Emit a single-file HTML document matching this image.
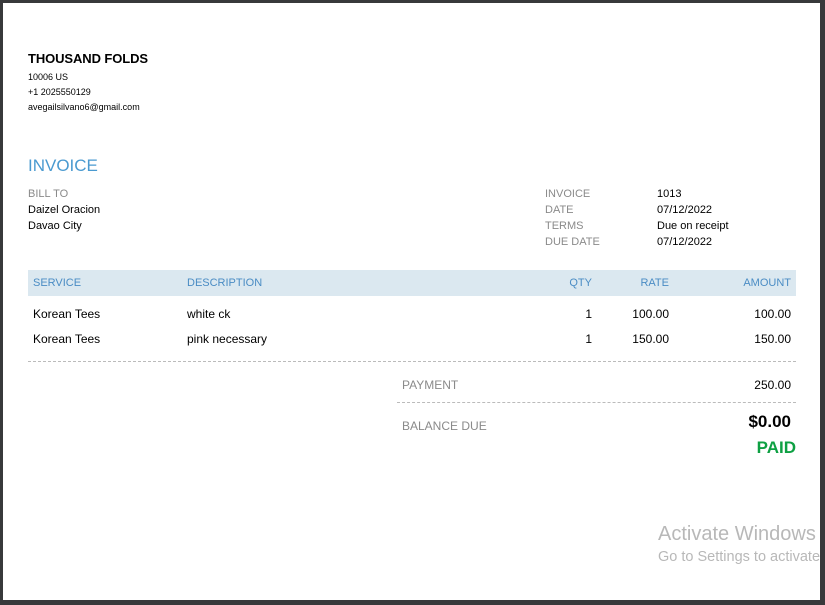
<!DOCTYPE html>
<html><head><style>
body{margin:0;width:825px;height:605px;background:#38393b;position:relative;overflow:hidden;font-family:"Liberation Sans",Arial,sans-serif;}
#p{position:absolute;left:3px;top:3px;width:817px;height:597px;background:#fff;}
.a{position:absolute;white-space:nowrap;}
.s{font-size:11px;color:#000;}
.g{font-size:11px;color:#8a8a8a;}
.h{font-size:11px;color:#4a8cc4;}
.r{text-align:right;}
</style></head><body>
<div id="p"></div>
<div class="a" style="left:28px;top:51px;font-size:13px;font-weight:bold;letter-spacing:-0.1px;">THOUSAND FOLDS</div>
<div class="a" style="left:28px;top:72px;font-size:9px;">10006 US</div>
<div class="a" style="left:28px;top:87px;font-size:9px;">+1 2025550129</div>
<div class="a" style="left:28px;top:102px;font-size:9px;">avegailsilvano6@gmail.com</div>
<div class="a" style="left:28px;top:156px;font-size:17px;color:#4a9ad0;">INVOICE</div>
<div class="a g" style="left:28px;top:188px;">BILL TO</div>
<div class="a s" style="left:28px;top:204px;">Daizel Oracion</div>
<div class="a s" style="left:28px;top:220px;">Davao City</div>
<div class="a g" style="left:545px;top:188px;">INVOICE</div>
<div class="a g" style="left:545px;top:204px;">DATE</div>
<div class="a g" style="left:545px;top:220px;">TERMS</div>
<div class="a g" style="left:545px;top:236px;">DUE DATE</div>
<div class="a s" style="left:657px;top:188px;">1013</div>
<div class="a s" style="left:657px;top:204px;">07/12/2022</div>
<div class="a s" style="left:657px;top:220px;">Due on receipt</div>
<div class="a s" style="left:657px;top:236px;">07/12/2022</div>
<div class="a" style="left:28px;top:270px;width:768px;height:26px;background:#dbe8f0;"></div>
<div class="a h" style="left:33px;top:277px;">SERVICE</div>
<div class="a h" style="left:187px;top:277px;">DESCRIPTION</div>
<div class="a h r" style="left:540px;top:277px;width:52px;">QTY</div>
<div class="a h r" style="left:610px;top:277px;width:59px;">RATE</div>
<div class="a h r" style="left:700px;top:277px;width:91px;">AMOUNT</div>
<div class="a" style="left:33px;top:307px;font-size:12px;">Korean Tees</div>
<div class="a" style="left:187px;top:307px;font-size:12px;">white ck</div>
<div class="a r" style="left:540px;top:307px;width:52px;font-size:12px;">1</div>
<div class="a r" style="left:610px;top:307px;width:59px;font-size:12px;">100.00</div>
<div class="a r" style="left:700px;top:307px;width:91px;font-size:12px;">100.00</div>
<div class="a" style="left:33px;top:332px;font-size:12px;">Korean Tees</div>
<div class="a" style="left:187px;top:332px;font-size:12px;">pink necessary</div>
<div class="a r" style="left:540px;top:332px;width:52px;font-size:12px;">1</div>
<div class="a r" style="left:610px;top:332px;width:59px;font-size:12px;">150.00</div>
<div class="a r" style="left:700px;top:332px;width:91px;font-size:12px;">150.00</div>
<div class="a" style="left:28px;top:361px;width:768px;border-top:1px dashed #bbb;"></div>
<div class="a" style="left:402px;top:378px;font-size:12px;color:#8a8a8a;">PAYMENT</div>
<div class="a r" style="left:700px;top:378px;width:91px;font-size:12px;">250.00</div>
<div class="a" style="left:397px;top:402px;width:399px;border-top:1px dashed #bbb;"></div>
<div class="a" style="left:402px;top:419px;font-size:12px;color:#8a8a8a;">BALANCE DUE</div>
<div class="a r" style="left:680px;top:412px;width:111px;font-size:17px;font-weight:bold;">$0.00</div>
<div class="a r" style="left:680px;top:438px;width:116px;font-size:17px;font-weight:bold;color:#0ea043;">PAID</div>
<div class="a" style="left:658px;top:523px;font-size:20px;color:#b8b8b8;">Activate Windows</div>
<div class="a" style="left:658px;top:549px;font-size:14.5px;color:#b8b8b8;">Go to Settings to activate</div>
<div class="a" style="left:820px;top:0;width:5px;height:605px;background:#38393b;"></div>
</body></html>
